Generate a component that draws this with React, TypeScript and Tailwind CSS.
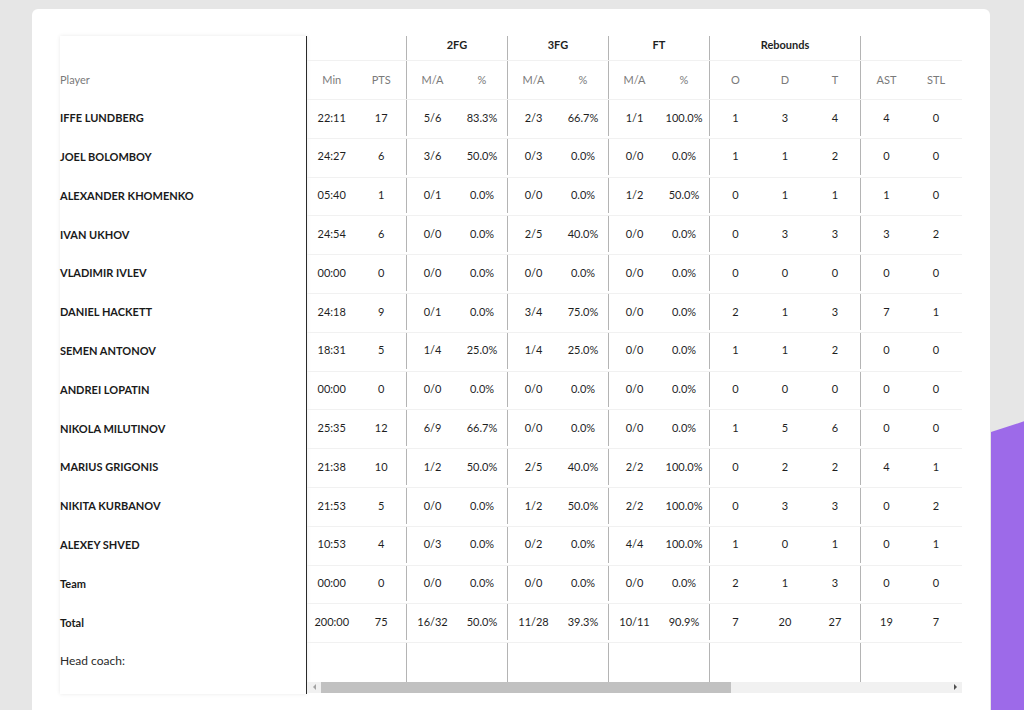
import React from "react";

type Row = {
  name: string;
  min: string;
  pts: string;
  fg2: [string, string];
  fg3: [string, string];
  ft: [string, string];
  reb: [string, string, string];
  ast: string;
  stl: string;
};

const rows: Row[] = [
  { name: "IFFE LUNDBERG", min: "22:11", pts: "17", fg2: ["5/6", "83.3%"], fg3: ["2/3", "66.7%"], ft: ["1/1", "100.0%"], reb: ["1", "3", "4"], ast: "4", stl: "0" },
  { name: "JOEL BOLOMBOY", min: "24:27", pts: "6", fg2: ["3/6", "50.0%"], fg3: ["0/3", "0.0%"], ft: ["0/0", "0.0%"], reb: ["1", "1", "2"], ast: "0", stl: "0" },
  { name: "ALEXANDER KHOMENKO", min: "05:40", pts: "1", fg2: ["0/1", "0.0%"], fg3: ["0/0", "0.0%"], ft: ["1/2", "50.0%"], reb: ["0", "1", "1"], ast: "1", stl: "0" },
  { name: "IVAN UKHOV", min: "24:54", pts: "6", fg2: ["0/0", "0.0%"], fg3: ["2/5", "40.0%"], ft: ["0/0", "0.0%"], reb: ["0", "3", "3"], ast: "3", stl: "2" },
  { name: "VLADIMIR IVLEV", min: "00:00", pts: "0", fg2: ["0/0", "0.0%"], fg3: ["0/0", "0.0%"], ft: ["0/0", "0.0%"], reb: ["0", "0", "0"], ast: "0", stl: "0" },
  { name: "DANIEL HACKETT", min: "24:18", pts: "9", fg2: ["0/1", "0.0%"], fg3: ["3/4", "75.0%"], ft: ["0/0", "0.0%"], reb: ["2", "1", "3"], ast: "7", stl: "1" },
  { name: "SEMEN ANTONOV", min: "18:31", pts: "5", fg2: ["1/4", "25.0%"], fg3: ["1/4", "25.0%"], ft: ["0/0", "0.0%"], reb: ["1", "1", "2"], ast: "0", stl: "0" },
  { name: "ANDREI LOPATIN", min: "00:00", pts: "0", fg2: ["0/0", "0.0%"], fg3: ["0/0", "0.0%"], ft: ["0/0", "0.0%"], reb: ["0", "0", "0"], ast: "0", stl: "0" },
  { name: "NIKOLA MILUTINOV", min: "25:35", pts: "12", fg2: ["6/9", "66.7%"], fg3: ["0/0", "0.0%"], ft: ["0/0", "0.0%"], reb: ["1", "5", "6"], ast: "0", stl: "0" },
  { name: "MARIUS GRIGONIS", min: "21:38", pts: "10", fg2: ["1/2", "50.0%"], fg3: ["2/5", "40.0%"], ft: ["2/2", "100.0%"], reb: ["0", "2", "2"], ast: "4", stl: "1" },
  { name: "NIKITA KURBANOV", min: "21:53", pts: "5", fg2: ["0/0", "0.0%"], fg3: ["1/2", "50.0%"], ft: ["2/2", "100.0%"], reb: ["0", "3", "3"], ast: "0", stl: "2" },
  { name: "ALEXEY SHVED", min: "10:53", pts: "4", fg2: ["0/3", "0.0%"], fg3: ["0/2", "0.0%"], ft: ["4/4", "100.0%"], reb: ["1", "0", "1"], ast: "0", stl: "1" },
  { name: "Team", min: "00:00", pts: "0", fg2: ["0/0", "0.0%"], fg3: ["0/0", "0.0%"], ft: ["0/0", "0.0%"], reb: ["2", "1", "3"], ast: "0", stl: "0" },
  { name: "Total", min: "200:00", pts: "75", fg2: ["16/32", "50.0%"], fg3: ["11/28", "39.3%"], ft: ["10/11", "90.9%"], reb: ["7", "20", "27"], ast: "19", stl: "7" },
];

function Cell({ children, index, muted }: { children?: React.ReactNode; index: number; muted?: boolean }) {
  // group starts: 2FG, 3FG, FT, Rebounds, AST
  const first = [2, 4, 6, 8, 11].includes(index);
  const width = index < 2 ? "w-[49.5px] " : first ? "w-[51px] border-l border-[#b4b4b4] pl-px " : "w-[50px] ";
  return (
    <div className={"flex items-center justify-center " + width + (muted ? "text-[#7a7a7a]" : "text-[#1f1f1f]")}>
      {children}
    </div>
  );
}

function StatRow({ cells, muted, className }: { cells: (string | undefined)[]; muted?: boolean; className: string }) {
  return (
    <div className={"flex " + className}>
      {cells.map((c, i) => (
        <Cell key={i} index={i} muted={muted}>
          {c}
        </Cell>
      ))}
    </div>
  );
}

function GroupHeader() {
  const groups = [
    { label: "", w: "w-[99px]", border: false },
    { label: "2FG", w: "w-[101px]", border: true },
    { label: "3FG", w: "w-[101px]", border: true },
    { label: "FT", w: "w-[101px]", border: true },
    { label: "Rebounds", w: "w-[151px]", border: true },
    { label: "", w: "w-[101px]", border: true },
  ];
  return (
    <div className="flex h-[25px] border-b border-[#f1f1f1]">
      {groups.map((g, i) => (
        <div
          key={i}
          className={
            g.w +
            " flex items-start justify-center pt-px font-bold text-[#1f1f1f] " +
            (g.border ? "border-l border-[#b4b4b4]" : "")
          }
        >
          {g.label}
        </div>
      ))}
    </div>
  );
}

export default function App() {
  return (
    <div
      className="relative h-[710px] w-full overflow-hidden bg-[#e6e6e6] text-[11px]"
      style={{ fontFamily: "Lato, 'Open Sans', Arial, sans-serif" }}
    >
      <div
        className="absolute left-[991px] top-[419px] h-[300px] w-[40px] bg-[#9d6ae9]"
        style={{ clipPath: "polygon(0 13px, 100% 0, 100% 100%, 0 100%)" }}
      />
      <div className="ml-[32px] mt-[9px] h-[720px] w-[958px] rounded-[6px] bg-white pl-[28px] pt-[27px]">
        <div className="flex">
          <div className="w-[247px] border-r border-[#2a2a2a] bg-white shadow-[0_0_4px_rgba(0,0,0,0.09)]">
            <div className="h-[25px]" />
            <div className="flex h-[39px] items-center text-[#7a7a7a]">Player</div>
            {rows.map((r) => (
              <div key={r.name} className="flex h-[38.8px] items-center pb-[2px] font-bold text-[#1a1a1a]">
                {r.name}
              </div>
            ))}
            <div className="flex h-[39px] items-center pb-[3px] text-[12px] text-[#2a2a2a]">Head coach:</div>
            <div className="h-[12px]" />
          </div>
          <div className="w-[655px]">
            <GroupHeader />
            <StatRow
              muted
              className="h-[39px] border-b border-[#f1f1f1]"
              cells={["Min", "PTS", "M/A", "%", "M/A", "%", "M/A", "%", "O", "D", "T", "AST", "STL"]}
            />
            {rows.map((r) => (
              <StatRow
                key={r.name}
                className="h-[38.8px] border-b border-[#f1f1f1] pb-[2px]"
                cells={[r.min, r.pts, r.fg2[0], r.fg2[1], r.fg3[0], r.fg3[1], r.ft[0], r.ft[1], r.reb[0], r.reb[1], r.reb[2], r.ast, r.stl]}
              />
            ))}
            <StatRow className="h-[38.4px]" cells={Array(13).fill(undefined)} />
            <div className="flex h-[11px] items-center bg-[#f1f1f1]">
              <div className="flex w-[14px] items-center justify-center">
                <div className="h-0 w-0 border-y-[3px] border-r-[3px] border-y-transparent border-r-[#a3a3a3]" />
              </div>
              <div className="h-[11px] w-[410px] bg-[#c1c1c1]" />
              <div className="flex-1" />
              <div className="flex w-[14px] items-center justify-center">
                <div className="h-0 w-0 border-y-[3px] border-l-[3px] border-y-transparent border-l-[#505050]" />
              </div>
            </div>
          </div>
        </div>
      </div>
    </div>
  );
}
